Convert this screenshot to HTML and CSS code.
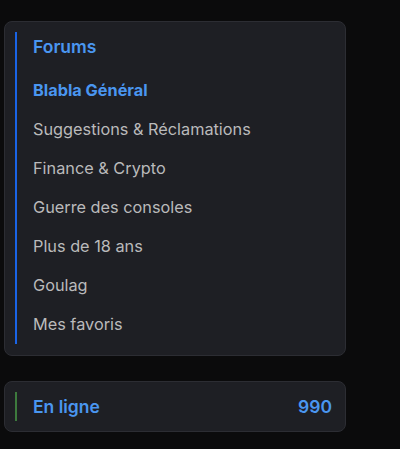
FILE: index.html
```html
<!DOCTYPE html>
<html lang="fr">
<head>
<meta charset="utf-8">
<link rel="stylesheet" href="styles.css">
</head>
<body>
<div class="sidebar">
  <section class="card card-forums">
    <div class="accent accent-blue">
      <h2 class="card-title">Forums</h2>
      <ul class="forum-list">
        <li class="forum-item active">Blabla Général</li>
        <li class="forum-item">Suggestions &amp; Réclamations</li>
        <li class="forum-item">Finance &amp; Crypto</li>
        <li class="forum-item">Guerre des consoles</li>
        <li class="forum-item">Plus de 18 ans</li>
        <li class="forum-item">Goulag</li>
        <li class="forum-item">Mes favoris</li>
      </ul>
    </div>
  </section>
  <section class="card">
    <div class="accent accent-green online-row">
      <span class="online-label">En ligne</span>
      <span class="online-count">990</span>
    </div>
  </section>
</div>
</body>
</html>
```

FILE: styles.css
```css
* { box-sizing: border-box; }
html, body { margin: 0; padding: 0; }
body {
  background: #0b0b0c;
  font-family: Inter, "Noto Sans", sans-serif;
  width: 400px;
  height: 449px;
  overflow: hidden;
}
.sidebar {
  width: 342px;
  margin-left: 4px;
  padding-top: 21px;
  display: flex;
  flex-direction: column;
  gap: 25px;
}
.card {
  background: #1e1f24;
  border: 1px solid #2c2d33;
  border-radius: 8px;
  padding: 10px;
}
.card-forums { padding-bottom: 11px; }
.accent {
  border-left: 2px solid #1a64e6;
  padding-left: 16px;
}
.accent-green { border-left-color: #3d7a3d; }
.card-title {
  margin: 0;
  padding-top: 3px;
  font-size: 17.5px;
  line-height: 24px;
  font-weight: 600;
  color: #4a96f0;
  margin-bottom: 12px;
}
.forum-list {
  list-style: none;
  margin: 0;
  padding: 0;
}
.forum-item {
  height: 39px;
  line-height: 39px;
  font-size: 16.3px;
  color: #bababb;
}
.forum-item.active {
  color: #4a96f0;
  font-weight: 700;
}
.online-row {
  display: flex;
  justify-content: space-between;
  align-items: center;
  height: 29px;
  padding-right: 3px;
}
.online-label, .online-count {
  font-size: 17.5px;
  font-weight: 600;
  color: #4a96f0;
}
```
